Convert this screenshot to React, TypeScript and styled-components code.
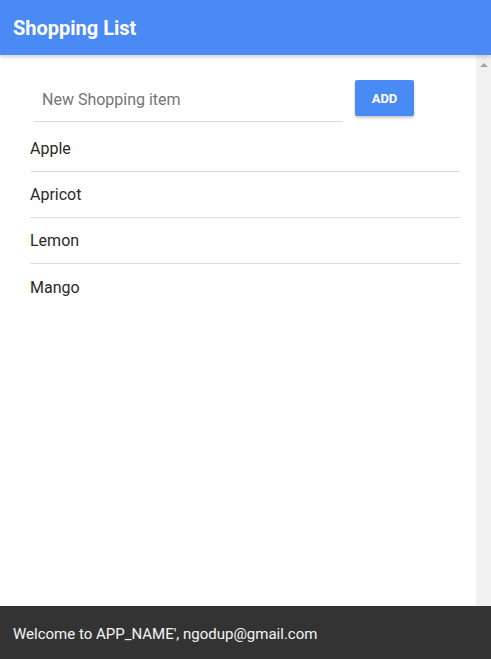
import { useState } from "react";
import styled, { createGlobalStyle } from "styled-components";

const items = ["Apple", "Apricot", "Lemon", "Mango"];

const App = () => {
  const [value, setValue] = useState("");

  return (
    <>
      <GlobalStyle />
      <Page>
        <Header>
          <Title>Shopping List</Title>
        </Header>
        <Body>
          <Content>
            <FormRow>
              <Input
                placeholder="New Shopping item"
                value={value}
                onChange={(e) => setValue(e.target.value)}
              />
              <AddButton type="button">ADD</AddButton>
            </FormRow>
            <List>
              {items.map((item) => (
                <Item key={item}>{item}</Item>
              ))}
            </List>
          </Content>
          <ScrollTrack>
            <ScrollArrow />
          </ScrollTrack>
        </Body>
        <Footer>Welcome to APP_NAME', ngodup@gmail.com</Footer>
      </Page>
    </>
  );
};

export default App;

// styles
const GlobalStyle = createGlobalStyle`
  html, body {
    margin: 0;
    padding: 0;
    height: 100%;
  }
  body {
    font-family: Roboto, "Liberation Sans", sans-serif;
    background: #fff;
  }
  #root {
    height: 100%;
  }
`;

const Page = styled.div`
  display: flex;
  flex-direction: column;
  height: 659px;
`;

const Header = styled.header`
  height: 55px;
  flex-shrink: 0;
  display: flex;
  align-items: center;
  padding: 0 13px;
  background-color: #4a8af4;
  box-shadow: 0 2px 4px rgba(0, 0, 0, 0.18);
  position: relative;
  z-index: 1;
`;

const Title = styled.h1`
  margin: 0;
  font-size: 20px;
  font-weight: 700;
  color: #fff;
`;

const Body = styled.main`
  flex: 1;
  display: flex;
  min-height: 0;
`;

const Content = styled.div`
  flex: 1;
  padding: 25px 16px 0 30px;
`;

const FormRow = styled.div`
  display: flex;
  align-items: flex-start;
  gap: 12px;
  padding-left: 4px;
`;

const Input = styled.input`
  width: 309px;
  height: 42px;
  box-sizing: border-box;
  border: none;
  border-bottom: 1px solid #d9d9d9;
  padding: 0 8px 3px;
  font-family: Roboto, "Liberation Sans", sans-serif;
  font-size: 16px;
  color: #212121;
  outline: none;
  background: transparent;
  ::placeholder {
    color: #a4a4a4;
  }
`;

const AddButton = styled.button`
  width: 59px;
  height: 36px;
  border: none;
  border-radius: 2px;
  background-color: #4a8af4;
  color: #fff;
  font-family: Roboto, "Liberation Sans", sans-serif;
  font-size: 13px;
  font-weight: 700;
  box-shadow: 0 2px 3px rgba(0, 0, 0, 0.22);
  cursor: pointer;
`;

const List = styled.ul`
  list-style: none;
  margin: 4px 0 0;
  padding: 0;
`;

const Item = styled.li`
  height: 46px;
  box-sizing: border-box;
  display: flex;
  align-items: center;
  font-size: 16px;
  color: #2a2a2a;
  border-bottom: 1px solid #dcdcdc;
  &:last-child {
    border-bottom: none;
  }
`;

const ScrollTrack = styled.div`
  width: 15px;
  flex-shrink: 0;
  background-color: #f1f1f1;
  display: flex;
  justify-content: center;
  padding-top: 8px;
  box-sizing: border-box;
`;

const ScrollArrow = styled.div`
  width: 0;
  height: 0;
  border-left: 4px solid transparent;
  border-right: 4px solid transparent;
  border-bottom: 4px solid #a3a3a3;
`;

const Footer = styled.footer`
  height: 53px;
  flex-shrink: 0;
  display: flex;
  align-items: center;
  padding: 3px 13px 0;
  box-sizing: border-box;
  background-color: #333;
  color: #f5f5f5;
  font-size: 15px;
`;
